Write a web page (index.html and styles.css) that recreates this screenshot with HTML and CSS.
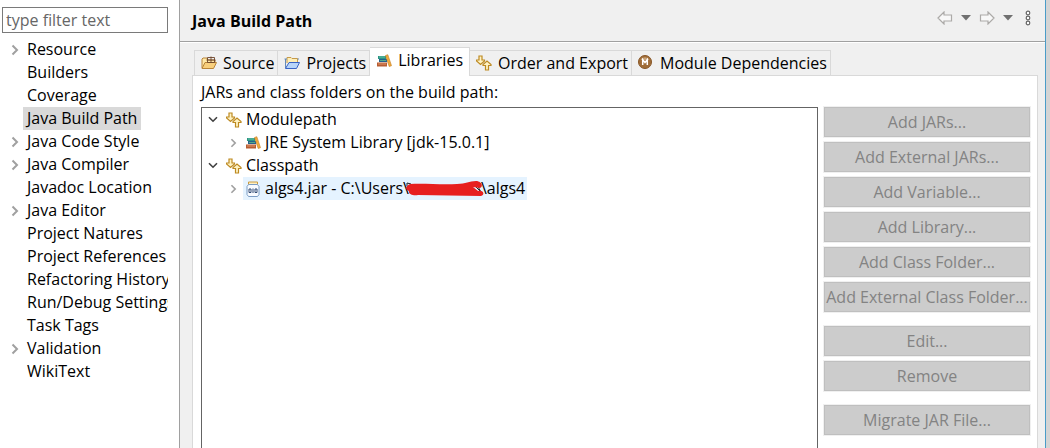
FILE: index.html
```html
<!DOCTYPE html>
<html lang="en">
<head>
<meta charset="utf-8">
<title>Java Build Path</title>
<link rel="stylesheet" href="styles.css">
</head>
<body>
<svg class="defs" aria-hidden="true">
  <symbol id="closed" viewBox="0 0 8 12"><path d="M1.5 1.5 6 6 1.5 10.5" fill="none" stroke="currentColor" stroke-width="2"/></symbol>
  <symbol id="open" viewBox="0 0 10 7"><path d="M1 1.2 5 5.2 9 1.2" fill="none" stroke="#404040" stroke-width="1.6"/></symbol>
  <symbol id="order" viewBox="0 0 16 16"><path d="M3 1h3v4h2.500v1l-4 3.500-4-3.500V5H3zM9.500 15v-4.500H7v-1L11 6l4 3.500v1h-2.500V15z" fill="#fff3c4" stroke="#bd8a22" stroke-width="1.200"/></symbol>
  <symbol id="books" viewBox="0 0 16 16"><path d="M2 3h8v3H2z" fill="#2b9484"/><path d="M3 4h6" stroke="#64c4a4"/><path d="M3 6h8v3H3z" fill="#25618c"/><path d="M4 7.500h6" stroke="#55a989"/><path d="M1 9.500h10v4H1z" fill="#b75c32"/><path d="M2 11h8" stroke="#de936a"/><path d="m9.500 2.500 2.300-.8 3.700 11-2.300.8z" fill="#efac3d" stroke="#c67b20" stroke-width=".6"/></symbol>
</svg>
<div class="dialog">
  <aside class="sidebar">
    <input class="filter" type="text" placeholder="type filter text" aria-label="Filter">
    <ul class="nav">
      <li><svg class="arrow"><use href="#closed"/></svg><button class="item">Resource</button></li>
      <li><button class="item">Builders</button></li>
      <li><button class="item">Coverage</button></li>
      <li><button class="item current" aria-current="page">Java Build Path</button></li>
      <li><svg class="arrow"><use href="#closed"/></svg><button class="item">Java Code Style</button></li>
      <li><svg class="arrow"><use href="#closed"/></svg><button class="item">Java Compiler</button></li>
      <li><button class="item">Javadoc Location</button></li>
      <li><svg class="arrow"><use href="#closed"/></svg><button class="item">Java Editor</button></li>
      <li><button class="item">Project Natures</button></li>
      <li><button class="item">Project References</button></li>
      <li><button class="item">Refactoring History</button></li>
      <li><button class="item">Run/Debug Settings</button></li>
      <li><button class="item">Task Tags</button></li>
      <li><svg class="arrow"><use href="#closed"/></svg><button class="item">Validation</button></li>
      <li><button class="item">WikiText</button></li>
    </ul>
  </aside>
  <main class="page">
    <header class="header">
      <h1>Java Build Path</h1>
      <div class="tools">
        <button class="tool" aria-label="Back"><svg width="16" height="14" viewBox="0 0 16 14"><path d="M1 7 7 1v3h7.500v6H7v3z" fill="#f8f8f8" stroke="#acaaa8" stroke-width="1.200"/></svg></button>
        <button class="tool" aria-label="Back history"><svg width="10" height="6" viewBox="0 0 10 6"><path d="M0 0h10L5 5.500z" fill="#707070"/></svg></button>
        <button class="tool" aria-label="Forward"><svg width="16" height="14" viewBox="0 0 16 14"><path d="M15 7 9 1v3H1.500v6H9v3z" fill="#f8f8f8" stroke="#acaaa8" stroke-width="1.200"/></svg></button>
        <button class="tool" aria-label="Forward history"><svg width="10" height="6" viewBox="0 0 10 6"><path d="M0 0h10L5 5.500z" fill="#707070"/></svg></button>
        <button class="tool menu" aria-label="View menu"><svg width="6" height="16" viewBox="0 0 6 16"><g fill="#fff" stroke="#666" stroke-width="1.200"><circle cx="3" cy="3" r="1.800"/><circle cx="3" cy="8" r="1.800"/><circle cx="3" cy="13" r="1.800"/></g></svg></button>
      </div>
    </header>
    <div class="body">
      <div class="tabs" role="tablist">
        <button class="tab" role="tab"><svg class="icon" viewBox="0 0 16 16"><path d="M1 13V4l1-1h4l1 2h7v4" fill="#ffe9a8" stroke="#b88438"/><path d="M1 13.500 4 7.500h11.500l-3 6z" fill="#f8cf7c" stroke="#b88438"/><path d="M6.500 2.500h7v5h-7zM10 1.500v6M5.500 5h9" fill="none" stroke="#6d452b" stroke-width=".9"/></svg>Source</button>
        <button class="tab" role="tab"><svg class="icon" viewBox="0 0 16 16"><path d="M3 8V2.500h4l1 1h5.500V8" fill="#ffefb8" stroke="#c69b4a"/><path d="M.5 4H3M13.500 4H15M1.500 4v9" stroke="#668bb9"/><path d="M1.500 13.500 5 7.500h10.500l-3 6z" fill="#b8d5fa" stroke="#3963c4"/></svg>Projects</button>
        <button class="tab active" role="tab" aria-selected="true"><svg class="icon"><use href="#books"/></svg>Libraries</button>
        <button class="tab" role="tab"><svg class="icon"><use href="#order"/></svg>Order and Export</button>
        <button class="tab" role="tab"><svg class="icon" viewBox="0 0 16 16"><circle cx="7" cy="7" r="6.500" fill="#a06d38" stroke="#875526"/><path d="M2.500 5a5 5 0 0 1 9 0" fill="#c7a27a"/><path d="M4.700 10V4.700L7 7.500l2.300-2.800V10" fill="none" stroke="#fff" stroke-width="1.500"/></svg>Module Dependencies</button>
      </div>
      <section class="panel" role="tabpanel">
        <p class="caption">JARs and class folders on the build path:</p>
        <div class="columns">
          <ul class="tree" role="tree">
            <li class="row" role="treeitem"><svg class="down"><use href="#open"/></svg><span class="label"><svg class="icon"><use href="#order"/></svg>Modulepath</span></li>
            <li class="row child" role="treeitem"><svg class="arrow thin"><use href="#closed"/></svg><span class="label"><svg class="icon"><use href="#books"/></svg>JRE System Library [jdk-15.0.1]</span></li>
            <li class="row" role="treeitem"><svg class="down"><use href="#open"/></svg><span class="label"><svg class="icon"><use href="#order"/></svg>Classpath</span></li>
            <li class="row child" role="treeitem" aria-selected="true"><svg class="arrow thin"><use href="#closed"/></svg><span class="label selected"><svg class="icon" viewBox="0 0 16 16"><path d="M3.500 1h9v2.500h-9z" fill="#fff0c0" stroke="#c99a42"/><path d="M3.500 3.500h9l1.500 2v8l-1.500 2h-9l-1.500-2v-8z" fill="#f8fbff" stroke="#7a9cc4"/><path d="M4 8h2v3.500H4zM8 7.500V12M10 8h2v3.500h-2z" fill="none" stroke="#304b75"/></svg>algs4.jar - C:\Users\<svg class="redaction" viewBox="0 0 78 16" preserveAspectRatio="none" aria-hidden="true"><path d="M5 3 1 2v3l4 4M68 4l7 7-4-7" fill="none" stroke="#222"/><path d="M4 3C18 2 35 4 51 3c9 0 12-3 19-3 5 0 8 5 4 7l-7-1 5 4c6-1 7 4 3 5-22 0-42-1-63-1-5 1-10-1-9-4C-1 9-1 5 4 3Z" fill="#e71f1f"/></svg>\algs4</span></li>
          </ul>
          <div class="actions">
            <button disabled>Add JARs...</button>
            <button disabled>Add External JARs...</button>
            <button disabled>Add Variable...</button>
            <button disabled>Add Library...</button>
            <button disabled>Add Class Folder...</button>
            <button disabled>Add External Class Folder...</button>
            <button class="group" disabled>Edit...</button>
            <button disabled>Remove</button>
            <button class="group" disabled>Migrate JAR File...</button>
          </div>
        </div>
      </section>
    </div>
  </main>
</div>
</body>
</html>
```
FILE: styles.css
```css
* { box-sizing: border-box; }
body {
  margin: 0;
  color: #000;
  background: #fff;
  font: 16px/23px "Open Sans", "Noto Sans", sans-serif;
}
button, input { font: inherit; color: inherit; }
button { margin: 0; padding: 0; border: 0; background: none; }
ul { margin: 0; padding: 0; list-style: none; }
svg { flex: none; }
.defs { position: absolute; width: 0; height: 0; }
.dialog {
  display: flex;
  min-height: 100vh;
  border-right: 4px solid #d4d4d4;
}
.sidebar {
  flex: none;
  width: 180px;
  padding: 7px 11px 0 2px;
  border-right: 1px solid #a0a0a0;
}
.filter {
  display: block;
  width: 100%;
  height: 26px;
  padding: 0 3px;
  border: 1px solid #7a7a7a;
  background: #fff;
}
.filter::placeholder { color: #666; opacity: 1; }
.nav { padding-top: 5px; overflow: hidden; }
.nav li {
  display: flex;
  align-items: center;
  height: 23px;
}
.item {
  flex: none;
  padding: 0 4px;
  white-space: nowrap;
}
.item:first-child { margin-left: 21px; }
.current { background: #d9d9d9; }
.arrow { width: 8px; height: 12px; color: #a0a0a0; }
.nav .arrow { margin: 0 4px 0 9px; }
.page {
  display: flex;
  flex: 1;
  flex-direction: column;
  min-width: 0;
  background: #f0f0f0;
  border-right: 1px solid #4a9cc8;
}
.header {
  display: flex;
  align-items: center;
  justify-content: space-between;
  height: 43px;
  padding: 0 14px 0 12px;
  border-bottom: 1px solid #fff;
  box-shadow: inset 0 -1px #a0a0a0;
}
h1 { margin: 0; font-size: 16px; line-height: 23px; }
.tools { display: flex; align-items: center; gap: 8px; padding-bottom: 6px; }
.tool { display: flex; }
.menu { margin-left: 4px; }
.body {
  display: flex;
  flex: 1;
  flex-direction: column;
  padding: 4px 7px 0 12px;
}
.tabs { display: flex; align-items: flex-end; padding-left: 2px; }
.tab {
  display: flex;
  align-items: center;
  gap: 6px;
  height: 25px;
  padding: 0 3px 0 6px;
  border: 1px solid #d9d9d9;
  border-width: 1px 1px 0 0;
  white-space: nowrap;
}
.tab:first-child { border-left-width: 1px; }
.active {
  position: relative;
  height: 29px;
  margin-bottom: -1px;
  padding: 0 6px 3px;
  background: #fff;
}
.icon { width: 16px; height: 16px; }
.panel {
  display: flex;
  flex: 1;
  flex-direction: column;
  padding: 5px 7px 0 8px;
  border: 1px solid #d9d9d9;
  border-bottom: 0;
  background: #fff;
}
.caption { margin: 0; padding-bottom: 3px; }
.columns { display: flex; flex: 1; gap: 6px; }
.tree {
  flex: 1;
  min-width: 0;
  border: 1px solid #646464;
  border-bottom: 0;
}
.row { display: flex; align-items: center; gap: 6px; height: 23px; padding-left: 6px; white-space: nowrap; }
.child { padding-left: 28px; }
.down { width: 10px; height: 7px; }
.thin { width: 7px; height: 10px; }
.label { display: flex; align-items: center; height: 23px; padding: 0 2px; }
.label .icon { margin-right: 4px; }
.selected { background: #e5f3ff; }
.redaction { width: 78px; height: 16px; margin: 0 -3px; }
.actions { display: flex; flex: none; flex-direction: column; gap: 5px; width: 206px; }
.actions button {
  height: 30px;
  border: 1px solid #bfbfbf;
  outline: 1px solid #f0f0f0;
  background: #ccc;
  color: #838383;
  white-space: nowrap;
}
.actions .group { margin-top: 9px; }
```
